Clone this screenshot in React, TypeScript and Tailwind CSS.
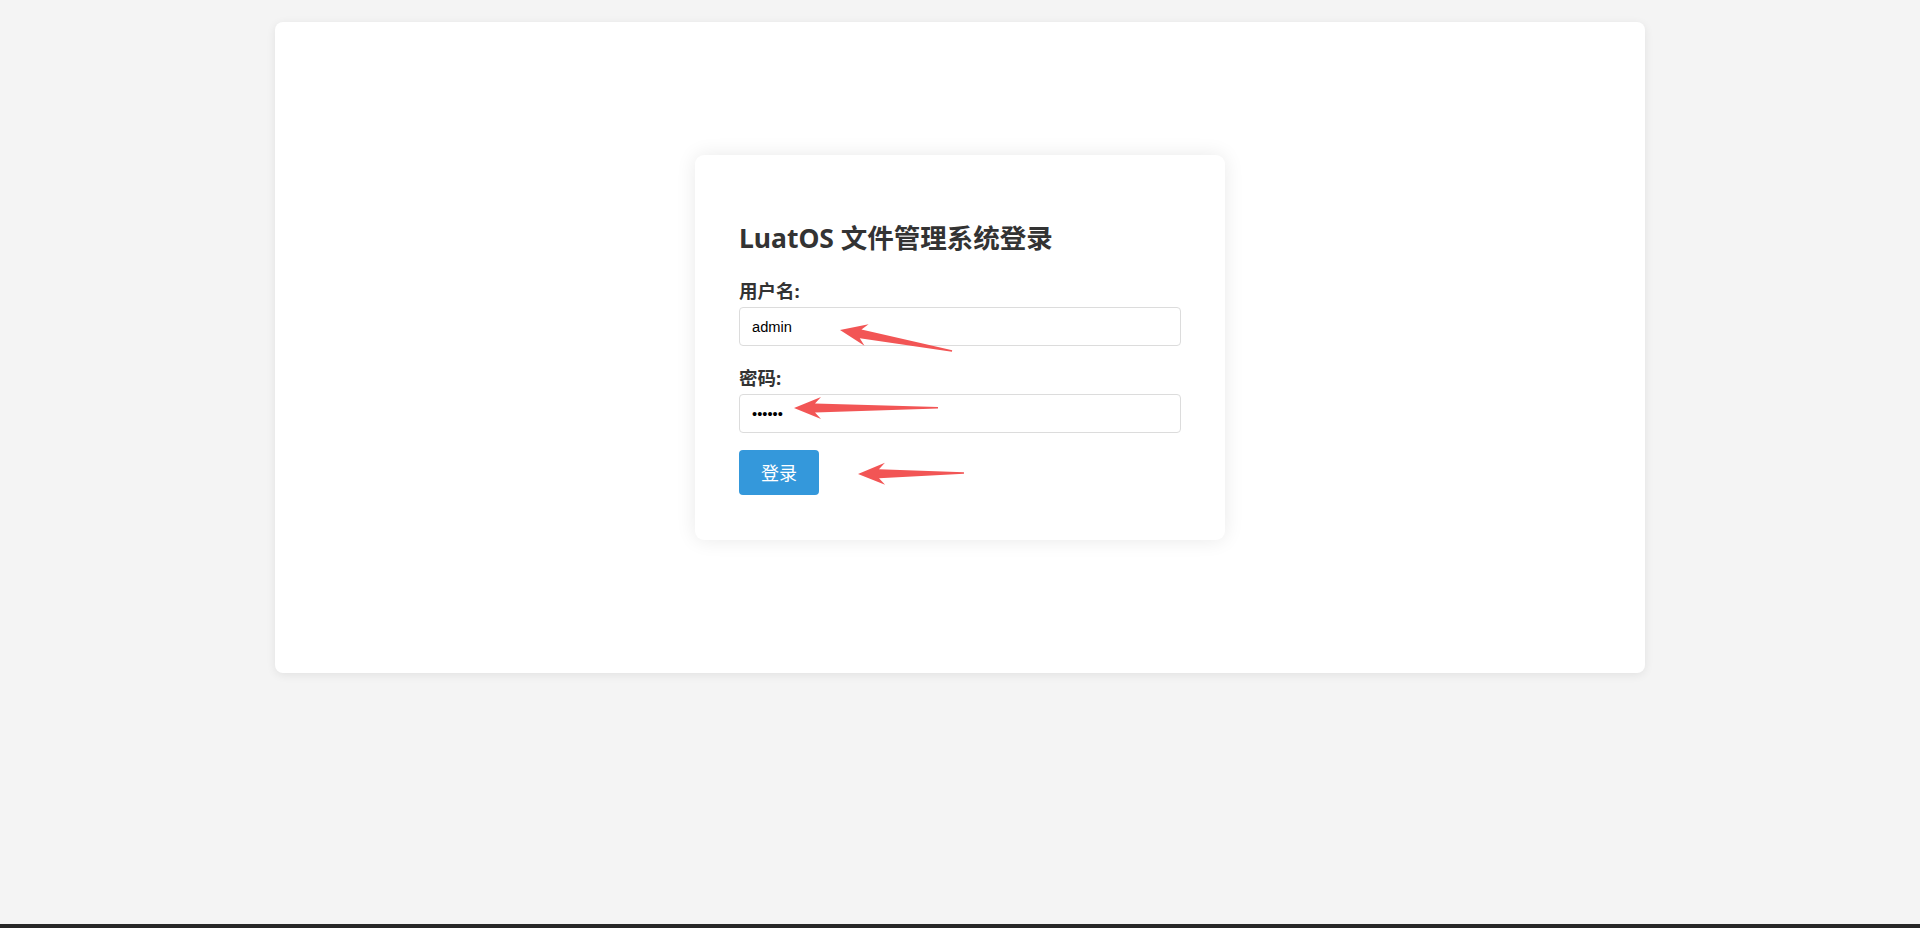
import React from "react"

// annotation arrows drawn on top of the screenshot (tip x/y, length, angle in degrees)
const arrows = [
  { x: 840, y: 330, len: 114, angle: 10.7 },
  { x: 794, y: 408, len: 144, angle: 0 },
  { x: 858, y: 474, len: 106, angle: -0.4 },
]

function Arrow({ x, y, len, angle }: { x: number; y: number; len: number; angle: number }) {
  const pts = `0,0 27,-11 21,-4.5 ${len},-1 ${len},0.6 21,4.5 27,11`
  return (
    <g transform={`translate(${x} ${y}) rotate(${angle})`}>
      <polygon points={pts} fill="#f25555" />
    </g>
  )
}

export default function App() {
  return (
    <div
      className="relative flex h-[928px] w-full flex-col bg-[#f4f4f4]"
      style={{ fontFamily: '"Noto Sans", "Noto Sans CJK SC", sans-serif' }}
    >
      <main className="flex-1 pt-[22px]">
        <div className="mx-auto flex h-[651px] w-[1370px] items-center justify-center rounded-lg bg-white shadow-[0_2px_10px_rgba(0,0,0,0.08)]">
          <div className="w-[530px] rounded-[9px] bg-white px-[44px] pt-[44px] pb-[45px] shadow-[0_0_20px_rgba(0,0,0,0.09)]">
            <h2 className="mt-[22px] mb-[24px] text-[26.5px] font-bold leading-[34px] text-[#333]">
              LuatOS 文件管理系统登录
            </h2>

            <div className="mb-[20px]">
              <label className="mb-[5px] block text-[18.5px] font-bold leading-[23px] text-[#333]">
                用户名:
              </label>
              <input
                type="text"
                defaultValue="admin"
                className="box-border h-[39px] w-full rounded-[4px] border border-[#dcdcdc] px-[12px] text-[14.67px] text-black outline-none"
                style={{ fontFamily: '"Liberation Sans", Arial, sans-serif' }}
              />
            </div>

            <div className="mb-[17px]">
              <label className="mb-[5px] block text-[18.5px] font-bold leading-[23px] text-[#333]">
                密码:
              </label>
              <input
                type="password"
                defaultValue="123456"
                className="box-border h-[39px] w-full rounded-[4px] border border-[#dcdcdc] px-[12px] text-[14.67px] text-black outline-none"
                style={{ fontFamily: '"Liberation Sans", Arial, sans-serif' }}
              />
            </div>

            <button className="h-[45px] w-[80px] rounded-[4px] bg-[#3498db] text-[18px] leading-none text-white">
              登录
            </button>
          </div>
        </div>
      </main>
      <div className="h-[4px] w-full bg-[#272727]" />

      <svg className="pointer-events-none absolute inset-0 h-full w-full" width="1920" height="928">
        {arrows.map((a, i) => (
          <Arrow key={i} {...a} />
        ))}
      </svg>
    </div>
  )
}
